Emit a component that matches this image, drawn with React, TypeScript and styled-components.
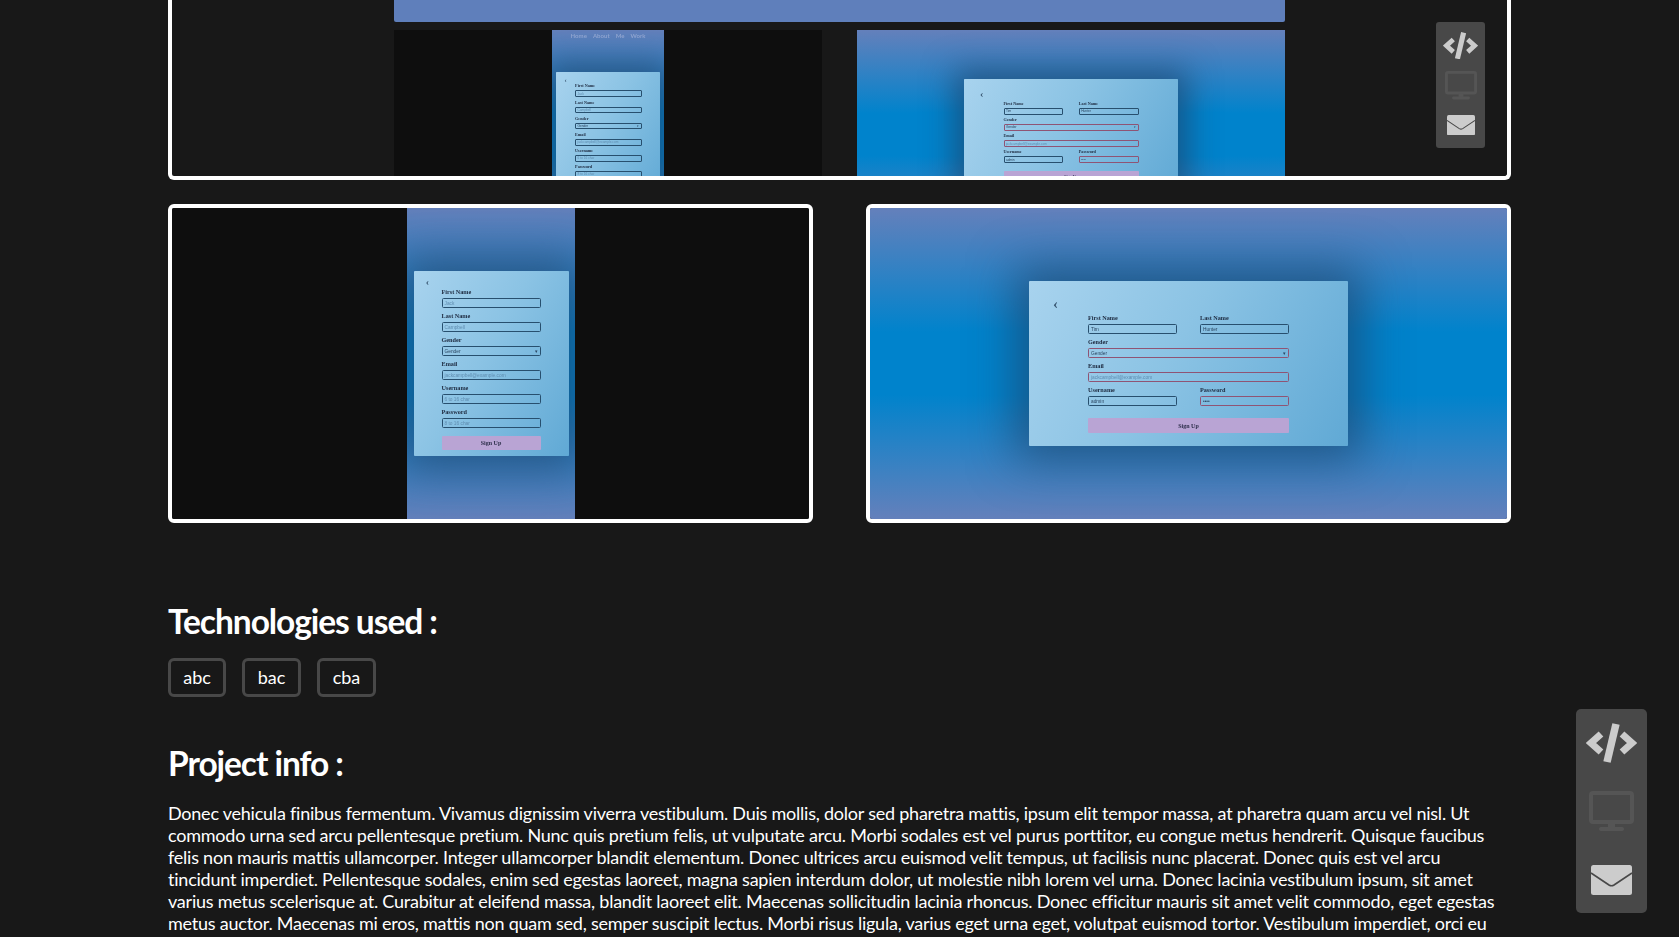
import React from "react";
import styled, { createGlobalStyle } from "styled-components";

const Global = createGlobalStyle`
  html, body { margin: 0; padding: 0; height: 937px; overflow: hidden; background: #181818; }
  body { font-family: "Lato", "Liberation Sans", sans-serif; color: #fff; }
`;

const Page = styled.main`
  box-sizing: border-box;
  width: 1679px;
  height: 937px;
  padding: 0 168px;
  overflow: hidden;
  background: #181818;
`;

const TopFrame = styled.section`
  position: relative;
  box-sizing: border-box;
  height: 180px;
  border: 4px solid #fff;
  border-top: none;
  border-radius: 0 0 6px 6px;
  overflow: hidden;
  display: flex;
  flex-direction: column;
  align-items: center;
`;

const Bar = styled.div`
  flex: none;
  width: 891px;
  height: 22px;
  margin-bottom: 8px;
  background: #5f7fbb;
  border-radius: 0 0 2px 2px;
  filter: blur(0.5px);
`;

const MiniRow = styled.div`
  flex: none;
  display: flex;
  gap: 35px;
  width: 891px;
`;

const ShotRow = styled.section`
  display: flex;
  justify-content: space-between;
  margin-top: 24px;
`;

const ShotFrame = styled.div`
  box-sizing: border-box;
  width: 645px;
  height: 319px;
  border: 4px solid #fff;
  border-radius: 6px;
  overflow: hidden;
`;

const Viewport = styled.div<{ $zoom: number }>`
  zoom: ${(p) => p.$zoom};
  flex: none;
  width: 637px;
  height: 311px;
  background: #0e0e0e;
  display: flex;
  justify-content: center;
  filter: blur(0.55px);
`;

const Gradient = styled.div<{ $narrow: boolean }>`
  position: relative;
  width: ${(p) => (p.$narrow ? 168 : 637)}px;
  height: 100%;
  background: linear-gradient(#6480bb 0%, #0083cc 40%, #0083cc 60%, #6480bb 100%);
  display: flex;
  align-items: center;
  justify-content: center;
  overflow: hidden;
`;

const NavLinks = styled.div`
  position: absolute;
  top: 3px;
  left: 0;
  right: 0;
  display: flex;
  justify-content: center;
  gap: 9px;
  font: 700 9px "Lato", sans-serif;
  color: #8ea3cf;
`;

const FormCard = styled.div<{ $narrow: boolean }>`
  box-sizing: border-box;
  flex: none;
  width: ${(p) => (p.$narrow ? 155 : 319)}px;
  margin-left: ${(p) => (p.$narrow ? 1 : 0)}px;
  display: grid;
  grid-template-columns: ${(p) => (p.$narrow ? "28px 99px 28px" : "59px 201px 59px")};
  padding: ${(p) => (p.$narrow ? "15px 0 6px" : "31px 0 13px")};
  background: linear-gradient(120deg, #a8d3ee 0%, #8bc3e4 45%, #60a9d5 100%);
  border-radius: 1px;
  box-shadow: 0 0 46px 14px rgba(35, 60, 95, 0.62);
`;

const Back = styled.div<{ $narrow: boolean }>`
  margin-top: ${(p) => (p.$narrow ? "-10px" : "-14px")};
  font: 700 ${(p) => (p.$narrow ? 10 : 15)}px "Liberation Serif", serif;
  color: #3a5873;
  text-align: center;
  line-height: 12px;
  padding-right: ${(p) => (p.$narrow ? 0 : 6)}px;
`;

const Fields = styled.div`
  display: flex;
  flex-direction: column;
  gap: 2px;
`;

const FieldRow = styled.div`
  display: grid;
  grid-template-columns: 89px 89px;
  justify-content: space-between;
`;

const Field = styled.div``;

const Label = styled.div`
  height: 12px;
  font: 700 6.2px/12px "Liberation Serif", serif;
  color: #202e44;
`;

const Input = styled.div<{ $error?: boolean; $muted?: boolean }>`
  box-sizing: border-box;
  height: 10px;
  padding: 0 2px;
  display: flex;
  align-items: center;
  justify-content: space-between;
  border: 1.4px solid ${(p) => (p.$error ? "#8f5474" : "#274f6e")};
  border-radius: 1.5px;
  font: 400 4.8px "Liberation Sans", sans-serif;
  color: ${(p) => (p.$muted ? "#5f8db0" : "#2a4560")};
  white-space: nowrap;
  overflow: hidden;
`;

const Submit = styled.div<{ $narrow: boolean }>`
  height: ${(p) => (p.$narrow ? 14 : 15)}px;
  margin-top: ${(p) => (p.$narrow ? 6 : 10)}px;
  background: #b9a4d4;
  border-radius: 1px;
  display: flex;
  align-items: center;
  justify-content: center;
  font: 700 6px "Liberation Serif", serif;
  color: #2c2e4a;
`;

const Heading = styled.h2<{ $top: number }>`
  margin: ${(p) => p.$top}px 0 0;
  font: 700 33.5px/38px "Lato", sans-serif;
  letter-spacing: -1.05px;
  color: #fff;
`;

const Tags = styled.div`
  display: flex;
  gap: 16px;
  margin-top: 18px;
`;

const Tag = styled.span<{ $w: number }>`
  box-sizing: border-box;
  width: ${(p) => p.$w}px;
  height: 39px;
  padding-bottom: 2px;
  border: 3px solid #484848;
  border-radius: 6px;
  display: flex;
  align-items: center;
  justify-content: center;
  font-size: 18px;
  color: #fff;
`;

const Body = styled.p`
  margin: 20px 0 0;
  font-size: 18px;
  line-height: 22px;
  letter-spacing: -0.23px;
  color: #fff;
`;

const Side = styled.nav<{ $small?: boolean }>`
  position: ${(p) => (p.$small ? "absolute" : "fixed")};
  top: ${(p) => (p.$small ? "22px" : "709px")};
  right: ${(p) => (p.$small ? "22px" : "32px")};
  box-sizing: border-box;
  width: ${(p) => (p.$small ? 49 : 71)}px;
  height: ${(p) => (p.$small ? 126 : 204)}px;
  padding-top: ${(p) => (p.$small ? 10 : 14)}px;
  background: #484848;
  border-radius: ${(p) => (p.$small ? 3 : 5)}px;
  display: flex;
  flex-direction: column;
  align-items: center;
  gap: ${(p) => (p.$small ? 12 : 28)}px;
`;

const MailSlot = styled.span<{ $small?: boolean }>`
  display: block;
  line-height: 0;
  margin-top: ${(p) => (p.$small ? 3 : 6)}px;
`;

const Svg = styled.svg`
  display: block;
  flex: none;
`;

const CodeIcon = ({ w }: { w: number }) => (
  <Svg width={w} height={(w * 40) / 51} viewBox="0 0 51 40" fill="none">
    <polyline points="15,11 5,20 15,29" stroke="#ccc" strokeWidth="7" />
    <polyline points="36,11 46,20 36,29" stroke="#ccc" strokeWidth="7" />
    <line x1="30" y1="1" x2="21" y2="39" stroke="#ccc" strokeWidth="7.5" />
  </Svg>
);

const MonitorIcon = ({ w }: { w: number }) => (
  <Svg width={w} height={(w * 40) / 45} viewBox="0 0 45 40" fill="none">
    <rect x="2" y="2" width="41" height="29" rx="2" stroke="#555" strokeWidth="4" />
    <rect x="19" y="32" width="7" height="5" fill="#555" />
    <rect x="10" y="36" width="25" height="4" rx="2" fill="#555" />
  </Svg>
);

const MailIcon = ({ w }: { w: number }) => (
  <Svg width={w} height={(w * 30) / 41} viewBox="0 0 41 30" fill="none">
    <rect x="0" y="0" width="41" height="30" rx="2.5" fill="#ccc" />
    <path d="M0 8 L18 20 Q20.5 21.5 23 20 L41 8" stroke="#484848" strokeWidth="1.6" />
  </Svg>
);

const Sidebar = ({ small }: { small?: boolean }) => (
  <Side $small={small}>
    <CodeIcon w={small ? 35 : 51} />
    <MonitorIcon w={small ? 32 : 45} />
    <MailSlot $small={small}>
      <MailIcon w={small ? 28 : 41} />
    </MailSlot>
  </Side>
);

const NameRow = ({ a, b, av, bv, am, bm, bErr }: { a: string; b: string; av: string; bv: string; am?: boolean; bm?: boolean; bErr?: boolean }) => (
  <FieldRow>
    <Field>
      <Label>{a}</Label>
      <Input $muted={am}>{av}</Input>
    </Field>
    <Field>
      <Label>{b}</Label>
      <Input $muted={bm} $error={bErr}>{bv}</Input>
    </Field>
  </FieldRow>
);

const Single = ({ label, value, muted, error, caret }: { label: string; value: string; muted?: boolean; error?: boolean; caret?: boolean }) => (
  <Field>
    <Label>{label}</Label>
    <Input $muted={muted} $error={error}>
      {value}
      {caret ? <span>▾</span> : null}
    </Input>
  </Field>
);

const Mock = ({ narrow, zoom, nav }: { narrow: boolean; zoom: number; nav?: boolean }) => (
  <Viewport $zoom={zoom}>
    <Gradient $narrow={narrow}>
      {nav ? (
        <NavLinks>
          <span>Home</span>
          <span>About</span>
          <span>Me</span>
          <span>Work</span>
        </NavLinks>
      ) : null}
      <FormCard $narrow={narrow}>
        <Back $narrow={narrow}>‹</Back>
        {narrow ? (
          <Fields>
            <Single label="First Name" value="Jack" muted />
            <Single label="Last Name" value="Campbell" muted />
            <Single label="Gender" value="Gender" caret />
            <Single label="Email" value="jackcampbell@example.com" muted />
            <Single label="Username" value="6 to 16 char" muted />
            <Single label="Password" value="8 to 16 char" muted />
            <Submit $narrow>Sign Up</Submit>
          </Fields>
        ) : (
          <Fields>
            <NameRow a="First Name" b="Last Name" av="Tim" bv="Hunter" />
            <Single label="Gender" value="Gender" caret error />
            <Single label="Email" value="jackcampbell@example.com" muted error />
            <NameRow a="Username" b="Password" av="admin" bv="••••" bErr />
            <Submit $narrow={false}>Sign Up</Submit>
          </Fields>
        )}
      </FormCard>
    </Gradient>
  </Viewport>
);

const TEXT =
  "Donec vehicula finibus fermentum. Vivamus dignissim viverra vestibulum. Duis mollis, dolor sed pharetra mattis, ipsum elit tempor massa, at pharetra quam arcu vel nisl. Ut commodo urna sed arcu pellentesque pretium. Nunc quis pretium felis, ut vulputate arcu. Morbi sodales est vel purus porttitor, eu congue metus hendrerit. Quisque faucibus felis non mauris mattis ullamcorper. Integer ullamcorper blandit elementum. Donec ultrices arcu euismod velit tempus, ut facilisis nunc placerat. Donec quis est vel arcu tincidunt imperdiet. Pellentesque sodales, enim sed egestas laoreet, magna sapien interdum dolor, ut molestie nibh lorem vel urna. Donec lacinia vestibulum ipsum, sit amet varius metus scelerisque at. Curabitur at eleifend massa, blandit laoreet elit. Maecenas sollicitudin lacinia rhoncus. Donec efficitur mauris sit amet velit commodo, eget egestas metus auctor. Maecenas mi eros, mattis non quam sed, semper suscipit lectus. Morbi risus ligula, varius eget urna eget, volutpat euismod tortor. Vestibulum imperdiet, orci eu";

export default function App() {
  return (
    <Page>
      <Global />
      <TopFrame>
        <Bar />
        <MiniRow>
          <Mock narrow zoom={0.672} nav />
          <Mock narrow={false} zoom={0.672} />
        </MiniRow>
        <Sidebar small />
      </TopFrame>
      <ShotRow>
        <ShotFrame>
          <Mock narrow zoom={1} />
        </ShotFrame>
        <ShotFrame>
          <Mock narrow={false} zoom={1} />
        </ShotFrame>
      </ShotRow>
      <Heading $top={79}>Technologies used :</Heading>
      <Tags>
        <Tag $w={58}>abc</Tag>
        <Tag $w={59}>bac</Tag>
        <Tag $w={59}>cba</Tag>
      </Tags>
      <Heading $top={47}>Project info :</Heading>
      <Body>{TEXT}</Body>
      <Sidebar />
    </Page>
  );
}
